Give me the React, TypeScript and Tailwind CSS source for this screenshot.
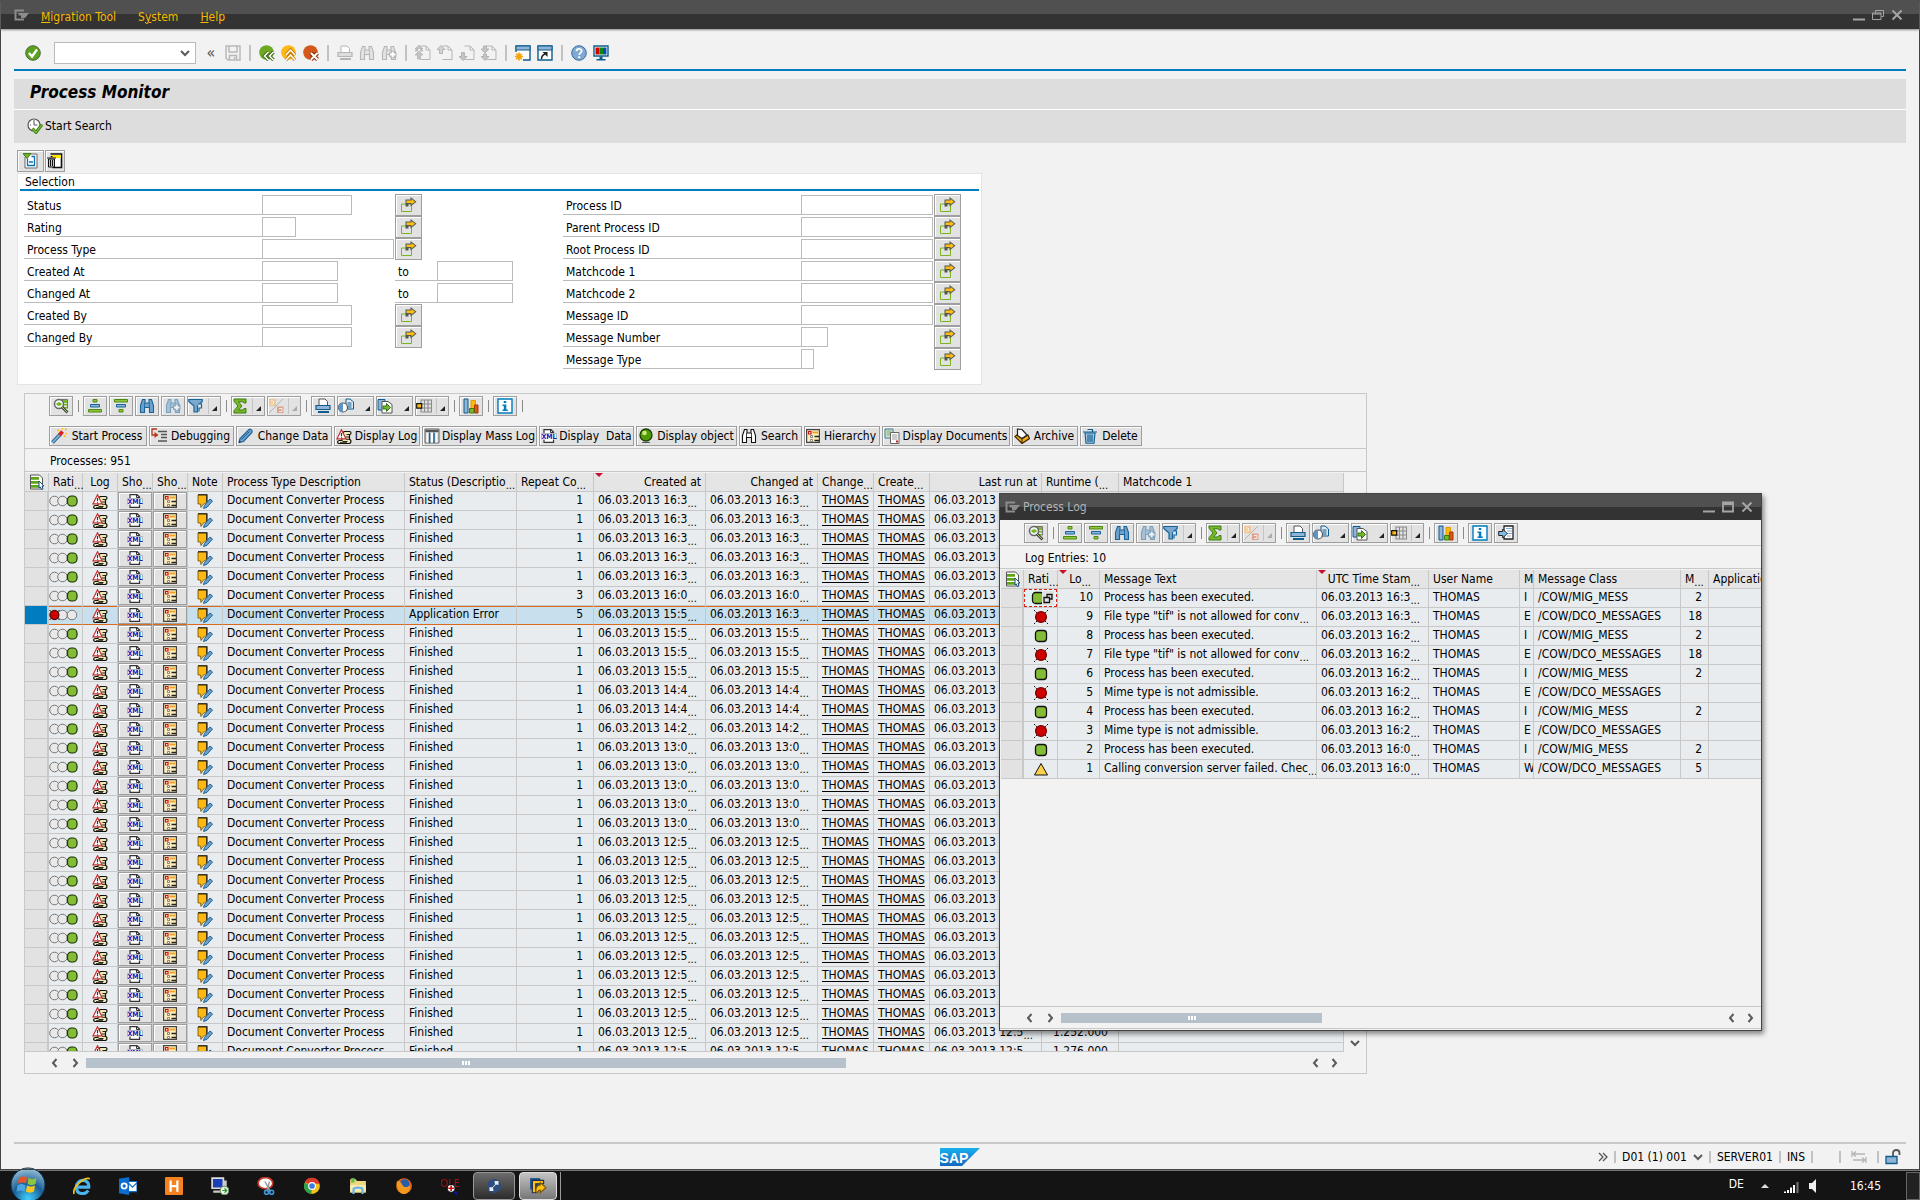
import type { ReactNode } from "react";

const FONT = "font-['DejaVu_Sans_Condensed','DejaVu_Sans',Tahoma,sans-serif]";

/* ---------- icons ---------- */

function Svg({ children, w = 16, h = 16, vb }: { children: ReactNode; w?: number; h?: number; vb?: string }) {
  return (
    <svg width={w} height={h} viewBox={vb ?? `0 0 ${w} ${h}`} fill="none" className="shrink-0" aria-hidden="true">
      {children}
    </svg>
  );
}

const SessionIcon = () => (
  <Svg w={16} h={12}>
    <path d="M10 10.500H1.500v-9H10" stroke="#8c8c8c" strokeWidth="2" />
    <path d="M4.500 4H15l-4 5H7V6.500H4.500z" fill="#8c8c8c" />
  </Svg>
);

const OkIcon = () => (
  <Svg>
    <circle cx="8" cy="8" r="7.300" fill="#5ba21f" stroke="#4b6b3c" />
    <path d="M4 8l3 3.500L12 4.500" stroke="#fff" strokeWidth="2.400" />
  </Svg>
);

const SaveIcon = () => (
  <Svg>
    <path d="M1 1h14v14H3l-2-2z" stroke="#b9b9b9" strokeWidth="1.500" />
    <path d="M4 1v6h8V1M4.500 15v-4.500h7V15M9.500 12v2" stroke="#b9b9b9" strokeWidth="1.500" />
  </Svg>
);

function RoundNav({ fill, children }: { fill: string; children: ReactNode }) {
  return (
    <Svg>
      <circle cx="7.500" cy="7.500" r="7.300" fill={fill} />
      {children}
    </Svg>
  );
}

const BackIcon = () => (
  <RoundNav fill="#6fa823">
    <path d="M9.500 7l-4 4 4 4M14.500 7l-4 4 4 4" stroke="#3f6b17" strokeWidth="3.400" />
    <path d="M9.500 7l-4 4 4 4M14.500 7l-4 4 4 4" stroke="#fff" strokeWidth="1.500" />
  </RoundNav>
);

const UpIcon = () => (
  <RoundNav fill="#fdb813">
    <path d="M5 10l4.500-5L14 10M5 15l4.500-5L14 15" stroke="#c77c05" strokeWidth="3.200" />
    <path d="M5 10l4.500-5L14 10M5 15l4.500-5L14 15" stroke="#fff" strokeWidth="1.500" />
  </RoundNav>
);

const CancelIcon = () => (
  <RoundNav fill="#d4581b">
    <path d="M8 8l6.500 6.500M14.500 8L8 14.500" stroke="#8e2b08" strokeWidth="4" />
    <path d="M8 8l6.500 6.500M14.500 8L8 14.500" stroke="#fff" strokeWidth="2" />
  </RoundNav>
);

const PrintIcon = ({ c = "#0f5c8c", f = "#8fb4d6" }: { c?: string; f?: string }) => (
  <Svg>
    <path d="M4 7V1h6l2.500 2.500V7" fill="#fff" stroke={c === "#0f5c8c" ? "#555" : c} />
    <path d="M1 7.500h14v4H1z" fill={f} stroke={c} strokeWidth="1.200" />
    <path d="M3 14h11" stroke={c} strokeWidth="2" />
  </Svg>
);

const FindIcon = ({ c = "#17649a", f = "#6fa0cb", plus }: { c?: string; f?: string; plus?: boolean }) => (
  <Svg>
    <path d="M3.500 1.500H6v3.500h4V1.500h2.500l2 6v7h-4v-5h-5v5h-4v-7z" fill={f} stroke={c} strokeWidth="1.100" />
    <path d="M5.500 5v5M10.500 5v5" stroke={c} strokeWidth=".8" />
    {plus && (
      <>
        <path d="M8 9.500h7.500M11.700 5.800v7.500" stroke={c} strokeWidth="4.400" />
        <path d="M9 9.500h5.500M11.700 6.800v5.500" stroke="#fff" strokeWidth="2" />
      </>
    )}
  </Svg>
);

const PageIcon = ({ dir }: { dir: "first" | "prev" | "next" | "last" }) => (
  <Svg>
    <path d="M5.500 1H11l4 4v9.500H5.500" stroke="#b5b5b5" />
    <path d="M11 1v4h4" stroke="#b5b5b5" />
    {dir === "first" && <path d="M4 0l4 4H5.500v2H8l-4-3-4 3h2.500V4H0zM4 6l4 4H5.500v4h-3v-4H0z" fill="#c4c4c4" stroke="#a9a9a9" strokeWidth=".6" />}
    {dir === "prev" && <path d="M4 .5l4 4H5.500v4h-3v-4H0z" fill="#d4d4d4" stroke="#a9a9a9" strokeWidth=".8" />}
    {dir === "next" && <path d="M4 15.500l4-4H5.500v-4h-3v4H0z" fill="#c4c4c4" stroke="#a9a9a9" strokeWidth=".8" />}
    {dir === "last" && <path d="M4 8L0 4h2.500V1h3v3H8zM4 15.500l4-4H5.500V9h-3v2.500H0z" fill="#c4c4c4" stroke="#a9a9a9" strokeWidth=".8" />}
  </Svg>
);

const NewSessionIcon = () => (
  <Svg>
    <path d="M1 7V1h14v14H8" fill="#fff" stroke="#0f5c8c" strokeWidth="1.400" />
    <path d="M1 1h14v4H1z" fill="#8fb4d6" stroke="#0f5c8c" />
    <path d="M4 7.500v8M0 11.500h8M1.200 8.700l5.600 5.600M6.800 8.700l-5.600 5.600" stroke="#f5a300" strokeWidth="1.600" />
  </Svg>
);

const ShortcutIcon = () => (
  <Svg>
    <path d="M1 1h14v14H1z" fill="#fff" stroke="#0f5c8c" strokeWidth="1.400" />
    <path d="M1 1h14v4H1z" fill="#8fb4d6" stroke="#0f5c8c" />
    <path d="M4.500 14c0-3 1-4 3.500-5" stroke="#222" strokeWidth="1.500" />
    <path d="M5.500 7h5v5z" fill="#222" />
  </Svg>
);

const HelpIcon = () => (
  <Svg>
    <circle cx="8" cy="8" r="7.300" fill="#7fa9d2" stroke="#3a6d9b" />
    <path d="M5.500 6.300C5.500 3 10.700 3.200 10.700 6c0 1.800-2.500 2-2.500 4" stroke="#fff" strokeWidth="1.800" />
    <path d="M7.200 11.300h2v1.900h-2z" fill="#fff" />
  </Svg>
);

const MonitorIcon = () => (
  <Svg>
    <path d="M1 1h14v10H1z" fill="#fff" stroke="#0f5c8c" strokeWidth="1.400" />
    <path d="M2.500 2.500h4v7h-4z" fill="#d40000" />
    <path d="M6.500 2.500h3.500v7H6.500z" fill="#0a8a12" />
    <path d="M10 2.500h3.500v7H10z" fill="#0050b0" />
    <path d="M6.500 11.500h3V14h3v1.500h-9V14h3z" fill="#0f5c8c" />
  </Svg>
);

const ExecuteIcon = () => (
  <Svg>
    <circle cx="7" cy="7" r="6" fill="#fff" stroke="#555" strokeWidth="1.200" />
    <path d="M7 2v5h3.500M3 7h1M7 11v1" stroke="#555" />
    <path d="M5.500 10.500l3.500 4 6-8" stroke="#3f7c14" strokeWidth="3" />
    <path d="M5.500 10.500l3.500 4 6-8" stroke="#7dc242" strokeWidth="1.200" />
  </Svg>
);

const DynSelIcon = () => (
  <Svg>
    <path d="M2 4v11h12V1H8" fill="#fff" stroke="#666" />
    <path d="M4.500 5.500v7h7v-9H8.500M6 9h4" stroke="#0f6fb0" strokeWidth="1.300" />
    <path d="M0 .5h8l-4 5z" fill="#6fb52b" stroke="#3f7c14" />
  </Svg>
);

const DeleteSelIcon = () => (
  <Svg>
    <path d="M3.500 1h11v13.500h-9" fill="#fff" stroke="#111" strokeWidth="1.600" />
    <path d="M4 2h10v3H4z" fill="#ffe600" />
    <path d="M1.500 6h6v8h-6z" fill="#b9c4ea" stroke="#111" />
    <path d="M0 5h9M3.500 3.500h2M3.500 7v6M5.500 7v6" stroke="#111" />
  </Svg>
);

const MultiIcon = () => (
  <Svg>
    <path d="M.5 7h10v7.500H.5z" stroke="#7ab51d" />
    <path d="M4.500 2.500h5V0l6 4.700-6 4.700V7H7.500v2.500h-3z" fill="#555" />
    <path d="M5.500 3.500h5V2l3.500 2.700-3.500 2.700V6h-5z" fill="#fdc010" />
  </Svg>
);

const DetailIcon = () => (
  <Svg>
    <path d="M4 1.500h10.500v9" stroke="#777" />
    <path d="M8 2h6v3H8zM10 6h4v1.500h-4zM10.500 9h3.500v1.500h-3.500z" fill="#76b82a" />
    <circle cx="6" cy="6" r="4.500" fill="#f4f8f4" stroke="#666" strokeWidth="1.500" />
    <path d="M3 6c2-2.500 4-2.500 6 0-2 2.500-4 2.500-6 0z" fill="#76b82a" />
    <path d="M9 9l5.500 5.500" stroke="#444" strokeWidth="2.800" />
    <path d="M9 9l5.500 5.500" stroke="#9ecb5f" />
  </Svg>
);

const SortAscIcon = () => (
  <Svg>
    <path d="M6 1.500h4v2.500H6z" fill="#8fc63d" stroke="#4f8a10" />
    <path d="M3.500 6.500h9v2.500h-9z" fill="#8fb4d6" stroke="#17649a" />
    <path d="M1.500 11.500h13V14h-13z" fill="#8fc63d" stroke="#4f8a10" />
  </Svg>
);

const SortDescIcon = () => (
  <Svg>
    <path d="M1.500 1.500h13V4h-13z" fill="#8fc63d" stroke="#4f8a10" />
    <path d="M3.500 6.500h9v2.500h-9z" fill="#8fb4d6" stroke="#17649a" />
    <path d="M6 11.500h4V14H6z" fill="#8fc63d" stroke="#4f8a10" />
  </Svg>
);

const FilterIcon = () => (
  <Svg>
    <path d="M.8 1.500h13.400v2L9.500 8v6H6V8L.8 3.500z" fill="#7ba8cf" stroke="#17649a" strokeWidth="1.200" />
    <path d="M10 6h3.500v4H11v3.500" fill="#dce8f2" stroke="#17649a" strokeWidth="1.200" />
  </Svg>
);

const SumIcon = () => (
  <Svg>
    <path d="M2 1h12v4h-2l-1-1.300H6.500L10 8l-3.500 4H11l1-1.500h2V15H2v-2.200L6 8 2 3.200z" fill="#76b82a" stroke="#3f7c14" />
  </Svg>
);

const SubtotalIcon = () => (
  <Svg>
    <path d="M1 1h7v7H1z" fill="#fbb03f" />
    <path d="M9 8.500h6.500v6.500H9z" fill="#e0623a" />
    <path d="M2.500 3h3v3h-3M11 10.500h3v3h-3" stroke="#fff6ee" />
    <path d="M1 15L15 1" stroke="#888" />
  </Svg>
);

const ViewsIcon = () => (
  <Svg>
    <path d="M8 1h4l3.500 3v7H8z" fill="#dce8f2" stroke="#0f5c8c" />
    <path d="M9.500 5h4M9.500 7h4M9.500 9h4" stroke="#0f5c8c" />
    <circle cx="5" cy="9.500" r="4.500" fill="#fff" stroke="#555" strokeWidth="1.200" />
    <path d="M5 5v9.500A4.500 4.500 0 015 5z" fill="#5f94c2" />
  </Svg>
);

const ExportIcon = () => (
  <Svg>
    <path d="M1 1.500h7V12H1z" fill="#8fb4d6" stroke="#0f5c8c" />
    <path d="M5 3.500h6l4 3V15H5z" fill="#fff" stroke="#555" />
    <path d="M6 8h3.500V5.500l4 4-4 4V11H6z" fill="#76b82a" stroke="#2d7a14" />
  </Svg>
);

const LayoutIcon = () => (
  <Svg>
    <path d="M6 2h9.500v12H5V2zM5 6h10.500M5 10h10.500M8.500 2v12M12 2v12" fill="#e3e3e3" stroke="#8a8a8a" strokeWidth="1.100" />
    <path d="M.7 5.700h5v4.500h-5z" fill="#fdb813" stroke="#111" strokeWidth="1.200" />
  </Svg>
);

const GraphIcon = () => (
  <Svg>
    <path d="M1 1h4v14H1z" fill="#8fb4d6" stroke="#0f5c8c" />
    <path d="M8 2.500h4.500V12H8z" fill="#fdb813" stroke="#e39a00" />
    <path d="M11.500 7H15v8h-3.500z" fill="#d4581b" stroke="#a83400" />
    <path d="M6.500 10.500h4.500V15H6.500z" fill="#76b82a" stroke="#3f7c14" />
  </Svg>
);

const InfoIcon = () => (
  <Svg>
    <path d="M1 1h14v14H1z" fill="#fff" stroke="#007cc0" strokeWidth="1.400" />
    <path d="M6.700 3h2.600v2H6.700zM5.500 6.500h3.800v5h1.500V13H5.500v-1.500h1.300V8H5.500z" fill="#007cc0" />
  </Svg>
);

const ExitIcon = () => (
  <Svg>
    <path d="M6 1h9v13H6z" fill="#fff" stroke="#222" strokeWidth="1.300" />
    <path d="M8 3.500h6M9 6h5M9 8.500h5M9 11h4" stroke="#7fa9d2" />
    <path d="M.7 6.500h4V4l4.500 4.500L4.700 13v-2.500h-4z" fill="#7cc0ee" stroke="#222" />
  </Svg>
);

const WandIcon = () => (
  <Svg>
    <path d="M1.500 14.500L9.500 6" stroke="#17649a" strokeWidth="3.600" />
    <path d="M1.500 14.500L9.500 6" stroke="#8fb4d6" strokeWidth="1.800" />
    <path d="M8.500 7l3-3.500" stroke="#e02020" strokeWidth="3.800" />
    <path d="M6.500 1.500L8 3M11.500 0v1.500M15.500.5L14 2M16 5.500h-1.500M14.500 9L13 7.500" stroke="#fdb813" strokeWidth="1.600" />
  </Svg>
);

const DebugIcon = () => (
  <Svg>
    <path d="M6 1H1v6h3" stroke="#b5371b" strokeWidth="1.300" />
    <path d="M3.500 4l4 3-4 3z" fill="#b5371b" />
    <path d="M7 3.500h9M10 6.500h6M10 9.500h6M7 13h9" stroke="#555" strokeWidth="1.600" />
  </Svg>
);

const PencilIcon = () => (
  <Svg>
    <path d="M1 14.500l1-4L11 1.500c1.500-1 4 1 3 3L5.500 13.500z" fill="#6fa0cb" stroke="#17649a" strokeWidth="1.100" />
    <path d="M3.500 11.500l8-8" stroke="#17649a" />
    <path d="M1 14.500l.5-2 1.500 1.500z" fill="#222" />
  </Svg>
);

const LogIcon = () => (
  <Svg w={16} h={15} vb="0 0 16 15">
    <path d="M8 2.500h5.500c2 0 2 3 0 3v5c2 0 2 4-.5 4H3.500c-2.500 0-2.500-3 0-3H6v-5z" fill="#efe9b4" stroke="#111" strokeWidth="1.200" />
    <path d="M6.500 12.500h5M4 13.700h7M10.500 5.500h3M9.500 8h3.500M10 10.300h3" stroke="#111" strokeWidth=".9" />
    <path d="M5.500.8L10 9.800H1z" fill="#fff" stroke="#c23030" strokeWidth="1.200" />
    <path d="M5.500 4v3M5.500 7.800v1" stroke="#333" strokeWidth="1.200" />
  </Svg>
);

const MassLogIcon = () => (
  <Svg>
    <path d="M1 1h14v14H1z" fill="#c9c9c9" stroke="#666" />
    <path d="M1.500 2h13v2h-13z" fill="#555" />
    <path d="M3.500 5v9.500M8 5v9.500M12.500 5v9.500" stroke="#fff" strokeWidth="2" />
    <path d="M5.500 4.500v10.500M10 4.500v10.500" stroke="#17649a" strokeWidth="1.400" />
  </Svg>
);

const XmlIcon = () => (
  <Svg w={16} h={14}>
    <path d="M3 5V.7h7L12.500 3v2M3 10v3.300h9.500V10" fill="#fff" stroke="#333" strokeWidth="1.200" />
    <path d="M9.500.7V3.500h3" stroke="#333" />
    <path d="M0 4h16v6.500H0z" fill="#fff" />
    <path d="M.5 10.500v-6h15v6" stroke="#8c94ab" strokeWidth=".7" />
    <text x="8" y="10" textAnchor="middle" fontSize="7" fontWeight="bold" fill="#0c14b4">XML</text>
  </Svg>
);

const BallIcon = () => (
  <Svg>
    <circle cx="8" cy="7" r="6" fill="#4f9a08" stroke="#1d3d04" strokeWidth="1.300" />
    <circle cx="6.500" cy="5" r="2.300" fill="#c9ec7a" />
    <path d="M4 14.500h8" stroke="#555" />
  </Svg>
);

const HierarchyIcon = () => (
  <Svg w={14} h={14}>
    <path d="M.6.6h12.800v12.800H.6z" fill="#fdeebb" stroke="#444" strokeWidth="1.200" />
    <path d="M2.500 2.500H5V5H2.500z" fill="#fff" stroke="#d01010" strokeWidth="1.200" />
    <path d="M6.500 3.500H12" stroke="#f0a020" strokeWidth="1.800" />
    <path d="M4.500 6.500h2v2h-2zM4.500 10.500h2v2h-2z" fill="#fff" stroke="#777" strokeWidth=".9" />
    <path d="M8.500 7.500H13M8.500 11.500H13" stroke="#222" strokeWidth="1.300" />
  </Svg>
);

const DocsIcon = () => (
  <Svg>
    <path d="M1 1h8v9H1z" fill="#d5e5ea" stroke="#3e7b8c" />
    <path d="M2.500 3h5M2.500 5h5M2.500 7h5" stroke="#7fae3c" />
    <path d="M6.500 4.500h8.500v11H6.500z" fill="#fff" stroke="#666" />
    <path d="M8 7h5.500M8 9h5.500M8 11h5.500" stroke="#999" />
    <path d="M12 12.500h2v2h-2z" fill="#d02020" />
  </Svg>
);

const ArchiveIcon = () => (
  <Svg>
    <path d="M1 8.500L3 7l5 3.500L14 7l1.500 3.500L8 15.500z" fill="#f0a818" stroke="#3b2500" strokeWidth="1.200" />
    <path d="M3.500 1L8 1.500l5 5.500-5 3.500-4.500-3z" fill="#fff" stroke="#222" strokeWidth="1.200" />
    <path d="M8 11v4" stroke="#3b2500" />
  </Svg>
);

const TrashIcon = () => (
  <Svg>
    <path d="M3 5h10l-1 10.300H4z" fill="#a8cbe3" stroke="#0f5c8c" strokeWidth="1.100" />
    <path d="M1 4h14M5.500 1.500h5V4M6 6.500v7.500M8 6.500v7.500M10 6.500v7.500" stroke="#0f5c8c" strokeWidth="1.200" />
  </Svg>
);

const SelectAllIcon = () => (
  <Svg>
    <path d="M1.500 1h9l3 3v11h-12z" fill="#fff" stroke="#555" />
    <path d="M2 3h8v2.700H2zM2 7h9v2.700H2zM2 11h8v2.700H2z" fill="#5da514" />
    <path d="M10 7l5 5h-2l1 3-1.500.5L11.300 13 10 14z" fill="#fff" stroke="#1c4f8a" />
  </Svg>
);

const NoteIcon = () => (
  <Svg w={16} h={15} vb="0 0 16 15">
    <path d="M1 1h8.500v8c-2 0-2 1-3.500 1.500L4 13.500 3.500 10H1z" fill="#fdb813" stroke="#6b4c00" strokeWidth=".8" />
    <path d="M1 .8h9V8" stroke="#111" strokeWidth="1.100" />
    <path d="M6.500 14.500l1-3L13 5l2.500 2-5.500 6.300z" fill="#6fa0cb" stroke="#17649a" />
  </Svg>
);

const LightsIcon = ({ red }: { red?: boolean }) => (
  <Svg w={29} h={14}>
    {[5.500, 13.500, 23].map((cx) => (
      <circle key={cx} cx={cx} cy="7" r="4.800" fill="#e9e9e9" stroke="#777" />
    ))}
    {red ? (
      <>
        <path d="M.5 2l10 10M10.500 2l-10 10" stroke="#111" />
        <circle cx="5.500" cy="7" r="4.500" fill="#cf0000" stroke="#3d0000" />
      </>
    ) : (
      <rect x="18.500" y="2" width="9.500" height="10" rx="4" fill="#84bd35" stroke="#1f3a08" strokeWidth="1.200" />
    )}
  </Svg>
);

const StateIcon = ({ s }: { s: string }) => (
  <Svg w={16} h={14}>
    {s === "ok" && <rect x="2.500" y="1.500" width="11" height="11" rx="3" fill="#84bd35" stroke="#111" strokeWidth="1.300" />}
    {s === "err" && (
      <>
        <path d="M1 0l14 14M15 0L1 14" stroke="#111" strokeDasharray="2 1" />
        <circle cx="8" cy="7" r="5.400" fill="#cf0000" stroke="#7a0000" strokeWidth="1.300" />
      </>
    )}
    {s === "warn" && <path d="M8 1.500L14.500 13h-13z" fill="#fdd04a" stroke="#111" />}
  </Svg>
);

function Chevron({ d }: { d: "l" | "r" | "d" }) {
  const path = { l: "M6.500 1L3 5l3.500 4", r: "M3.500 1L7 5l-3.500 4", d: "M1 3l4 4 4-4" }[d];
  return (
    <Svg w={10} h={10}>
      <path d={path} stroke="#5a5a5a" strokeWidth="2" />
    </Svg>
  );
}

const SapLogo = () => (
  <Svg w={42} h={18}>
    <defs>
      <linearGradient id="sap" x1="0" y1="0" x2="0" y2="1">
        <stop offset="0" stopColor="#18b0ee" />
        <stop offset="1" stopColor="#1468be" />
      </linearGradient>
    </defs>
    <path d="M1 0h40L23 18H1z" fill="url(#sap)" />
    <text x="15" y="14.500" textAnchor="middle" fontSize="14" fontWeight="bold" fontFamily="Liberation Sans, Arial, sans-serif" fill="#fff">SAP</text>
  </Svg>
);

/* ---------- shared controls ---------- */

const BTN = "flex items-center border border-[#9e9e9e] bg-[#e2e2e2] shadow-[inset_1px_1px_0_#fff]";

function Flat({ label, children }: { label: string; children: ReactNode }) {
  return (
    <button type="button" aria-label={label} className="flex w-[22px] items-center justify-center">
      {children}
    </button>
  );
}

const Sep = () => <span className="mx-[5px] h-4 w-0.5 bg-[#c2c2c2]" />;

const MultiButton = ({ label }: { label: string }) => (
  <button type="button" aria-label={`Multiple selection ${label}`} className={`${BTN} h-[22px] w-[27px] justify-center`}>
    <MultiIcon />
  </button>
);

function Tool({ label, children, menu, wide, off }: { label: string; children: ReactNode; menu?: boolean; wide?: boolean; off?: boolean }) {
  return (
    <button
      type="button"
      aria-label={label}
      className={`${BTN} h-5 ${menu ? (wide ? "w-[37px]" : "w-[34px]") : "w-6"} justify-center`}
    >
      <span className={off ? "opacity-50" : ""}>{children}</span>
      {menu && (
        <span className={`ml-auto flex h-4 items-end p-0.5 ${wide ? "" : "border-l border-[#c4c4c4]"}`}>
          <Svg w={7} h={7}>
            <path d="M6 1v5H1z" fill={off ? "#aaa" : "#222"} />
          </Svg>
        </span>
      )}
    </button>
  );
}

const ToolSep = () => (
  <span className="flex w-1.5 justify-center">
    <span className="h-3 w-px bg-[#8a8a8a]" />
  </span>
);

function AlvToolbar({ exit }: { exit?: boolean }) {
  return (
    <div className="flex items-center gap-0.5">
      <Tool label="Details"><DetailIcon /></Tool>
      <ToolSep />
      <Tool label="Sort ascending"><SortAscIcon /></Tool>
      <Tool label="Sort descending"><SortDescIcon /></Tool>
      <Tool label="Find"><FindIcon /></Tool>
      <Tool label="Find next" off><FindIcon plus /></Tool>
      <Tool label="Filter" menu><FilterIcon /></Tool>
      <ToolSep />
      <Tool label="Total" menu><SumIcon /></Tool>
      <Tool label="Subtotals" menu off><SubtotalIcon /></Tool>
      <ToolSep />
      <Tool label="Print"><PrintIcon /></Tool>
      <Tool label="Views" menu wide><ViewsIcon /></Tool>
      <Tool label="Export" menu wide><ExportIcon /></Tool>
      <Tool label="Layout" menu><LayoutIcon /></Tool>
      <ToolSep />
      <Tool label="Graphic"><GraphIcon /></Tool>
      <ToolSep />
      <Tool label="Information"><InfoIcon /></Tool>
      {exit ? <Tool label="Close log"><ExitIcon /></Tool> : <ToolSep />}
    </div>
  );
}

// Long values are cut off and end in three low dots
function Cut({ children }: { children: string }) {
  return (
    <>
      {children}
      <span className="align-sub text-[11px] leading-[0]">...</span>
    </>
  );
}

const SortMark = () => <span className="absolute top-0 left-px border-x-4 border-t-4 border-x-transparent border-t-[#c8102e]" />;

const TH = "relative h-[19px] border-r border-b border-[#c8c8c8] bg-[#e5e5e5] px-1 pt-px pb-0 text-left align-top font-normal leading-[17px]";
const TD = "h-[19px] overflow-hidden border-r border-b border-[#c8c8c8] px-1 py-0 align-top leading-[17px]";

/* ---------- selection form ---------- */

type Field = { label: string; width: string; to?: boolean };

const leftFields: Field[] = [
  { label: "Status", width: "w-[90px]" },
  { label: "Rating", width: "w-[34px]" },
  { label: "Process Type", width: "w-[132px]" },
  { label: "Created At", width: "w-[76px]", to: true },
  { label: "Changed At", width: "w-[76px]", to: true },
  { label: "Created By", width: "w-[90px]" },
  { label: "Changed By", width: "w-[90px]" },
];

const rightFields: Field[] = [
  { label: "Process ID", width: "w-[132px]" },
  { label: "Parent Process ID", width: "w-[132px]" },
  { label: "Root Process ID", width: "w-[132px]" },
  { label: "Matchcode 1", width: "w-[132px]" },
  { label: "Matchcode 2", width: "w-[132px]" },
  { label: "Message ID", width: "w-[132px]" },
  { label: "Message Number", width: "w-[27px]" },
  { label: "Message Type", width: "w-[13px]" },
];

const LABEL = "h-5 border-b border-[#bbb] pl-[3px] leading-[22px]";
const INPUT = "h-5 border border-[#bbb] bg-white px-1 outline-none";

function FieldRow({ field }: { field: Field }) {
  const id = field.label.toLowerCase().replace(/ /g, "-");
  return (
    <div className="flex h-[22px] items-center">
      <label htmlFor={id} className={`${LABEL} w-[238px]`}>{field.label}</label>
      <div className="w-[133px]">
        <input id={id} className={`${INPUT} ${field.width} block`} />
      </div>
      {field.to ? (
        <>
          <label htmlFor={`${id}-to`} className={`${LABEL} w-[42px]`}>to</label>
          <input id={`${id}-to`} className={`${INPUT} w-[76px]`} />
        </>
      ) : (
        <MultiButton label={field.label} />
      )}
    </div>
  );
}

/* ---------- process grid ---------- */

const times = [
  ...Array(5).fill("16:3"),
  "16:0",
  ...Array(4).fill("15:5"),
  "14:4",
  "14:4",
  "14:2",
  ...Array(5).fill("13:0"),
  ...Array(12).fill("12:5"),
] as string[];

const processes = times.map((time, i) => ({
  id: i,
  error: i === 6,
  status: i === 6 ? "Application Error" : "Finished",
  repeat: i === 5 ? 3 : i === 6 ? 5 : 1,
  created: time,
  changed: i === 6 ? "16:3" : time,
  runtime: i === 28 ? "1.252.000" : i === 29 ? "1.276.000" : "",
}));

const actions: [string, ReactNode, string][] = [
  ["Start Process", <WandIcon />, "w-[98px]"],
  ["Debugging", <DebugIcon />, "w-[85px]"],
  ["Change Data", <PencilIcon />, "w-24"],
  ["Display Log", <LogIcon />, "w-[86px]"],
  ["Display Mass Log", <MassLogIcon />, "w-[115px]"],
  ["Display  Data", <XmlIcon />, "w-[95px]"],
  ["Display object", <BallIcon />, "w-[101px]"],
  ["Search", <FindIcon c="#111" f="#fff" />, "w-[63px]"],
  ["Hierarchy", <HierarchyIcon />, "w-[76px]"],
  ["Display Documents", <DocsIcon />, "w-[128px]"],
  ["Archive", <ArchiveIcon />, "w-[66px]"],
  ["Delete", <TrashIcon />, "w-[62px]"],
];

function ProcessTable() {
  return (
    <table className="w-full table-fixed border-separate border-spacing-0 whitespace-nowrap">
      <colgroup>
        <col className="w-[24px]" />
        <col className="w-[34px]" />
        <col className="w-[35px]" />
        <col className="w-[35px]" />
        <col className="w-[35px]" />
        <col className="w-[35px]" />
        <col className="w-[182px]" />
        <col className="w-[112px]" />
        <col className="w-[77px]" />
        <col className="w-[112px]" />
        <col className="w-[112px]" />
        <col className="w-[56px]" />
        <col className="w-[56px]" />
        <col className="w-[112px]" />
        <col className="w-[77px]" />
        <col />
      </colgroup>
      <thead>
        <tr>
          <th className={TH} aria-label="Select all"><SelectAllIcon /></th>
          <th className={TH}><Cut>Rati</Cut></th>
          <th className={`${TH} text-center!`}>Log</th>
          <th className={TH}><Cut>Sho</Cut></th>
          <th className={TH}><Cut>Sho</Cut></th>
          <th className={TH}>Note</th>
          <th className={TH}>Process Type Description</th>
          <th className={TH}><Cut>Status (Descriptio</Cut></th>
          <th className={TH}><Cut>Repeat Co</Cut></th>
          <th className={`${TH} text-right`}><SortMark />Created at</th>
          <th className={`${TH} text-right`}>Changed at</th>
          <th className={TH}><Cut>Change</Cut></th>
          <th className={TH}><Cut>Create</Cut></th>
          <th className={`${TH} text-right`}>Last run at</th>
          <th className={TH}><Cut>Runtime (</Cut></th>
          <th className={TH}>Matchcode 1</th>
        </tr>
      </thead>
      <tbody>
        {processes.map((p) => {
          const cell = p.error
            ? `${TD} border-b-[#d96b1f] bg-[#c8e0ed] shadow-[inset_0_1px_0_#d96b1f]`
            : `${TD} bg-[#e8ecef]`;
          return (
            <tr key={p.id}>
              <td className={`${TD} border-r-2 ${p.error ? "bg-[#007cc0]" : "bg-[#e2e2e2]"}`} />
              <td className={cell}><div className="-mx-1 flex h-[18px] items-center"><LightsIcon red={p.error} /></div></td>
              <td className={cell}><div className="flex h-[18px] items-center justify-center"><LogIcon /></div></td>
              <td className={cell}>
                <button type="button" aria-label="Show XML" className={`${BTN} -mx-1 h-[18px] w-[34px] justify-center`}><XmlIcon /></button>
              </td>
              <td className={cell}>
                <button type="button" aria-label="Show hierarchy" className={`${BTN} -mx-1 h-[18px] w-[34px] justify-center`}><HierarchyIcon /></button>
              </td>
              <td className={cell}><div className="flex h-[18px] items-center justify-center"><NoteIcon /></div></td>
              <td className={cell}>Document Converter Process</td>
              <td className={cell}>{p.status}</td>
              <td className={`${cell} pr-2.5 text-right`}>{p.repeat}</td>
              <td className={cell}><Cut>{`06.03.2013 ${p.created}`}</Cut></td>
              <td className={cell}><Cut>{`06.03.2013 ${p.changed}`}</Cut></td>
              <td className={cell}><a href="#" className="underline underline-offset-2">THOMAS</a></td>
              <td className={cell}><a href="#" className="underline underline-offset-2">THOMAS</a></td>
              <td className={cell}><Cut>{`06.03.2013 ${p.created}`}</Cut></td>
              <td className={`${cell} pr-2.5 text-right`}>{p.runtime}</td>
              <td className={cell} />
            </tr>
          );
        })}
      </tbody>
    </table>
  );
}

function ScrollBar({ thumb }: { thumb: string }) {
  return (
    <div className="flex h-[21px] items-center">
      <div className="flex gap-2.5 pr-1.5">
        <Chevron d="l" />
        <Chevron d="r" />
      </div>
      <div className={`${thumb} flex h-2.5 items-center justify-center gap-px bg-[#b7c1cc]`}>
        <span className="h-1 w-0.5 bg-white" />
        <span className="h-1 w-0.5 bg-white" />
        <span className="h-1 w-0.5 bg-white" />
      </div>
      <div className="ml-auto flex gap-2">
        <Chevron d="l" />
        <Chevron d="r" />
      </div>
    </div>
  );
}

function ProcessGrid() {
  return (
    <section className="mt-2 ml-2.5 w-full max-w-[1343px] border border-[#c8c8c8]">
      <div className="pt-0.5 pl-6">
        <AlvToolbar />
      </div>
      <div className="flex gap-0.5 border-b border-[#c8c8c8] pt-2.5 pb-0.5 pl-6">
        {actions.map(([label, icon, width]) => (
          <button key={label} type="button" className={`${BTN} ${width} h-5 gap-px overflow-hidden pl-px whitespace-pre`}>
            {icon}
            <span className="flex-1 text-center">{label}</span>
          </button>
        ))}
      </div>
      <div className="h-[23px] border-b border-[#c8c8c8] pl-[25px] leading-[25px]">Processes: 951</div>
      <div className="flex">
        <div className="h-[580px] flex-1 overflow-hidden border-b border-[#c8c8c8] pt-px">
          <ProcessTable />
        </div>
        <div className="flex w-[22px] items-end justify-center pb-1">
          <Chevron d="d" />
        </div>
      </div>
      <div className="pr-[27px] pl-[25px]">
        <ScrollBar thumb="w-[760px]" />
      </div>
    </section>
  );
}

/* ---------- process log window ---------- */

const OK_TEXT = "Process has been executed.";
const logEntries = [
  { no: 10, state: "ok", text: OK_TEXT, time: "16:3", type: "I", msg: "2" },
  { no: 9, state: "err", text: 'File type "tif" is not allowed for conv', cut: true, time: "16:3", type: "E", msg: "18" },
  { no: 8, state: "ok", text: OK_TEXT, time: "16:2", type: "I", msg: "2" },
  { no: 7, state: "err", text: 'File type "tif" is not allowed for conv', cut: true, time: "16:2", type: "E", msg: "18" },
  { no: 6, state: "ok", text: OK_TEXT, time: "16:2", type: "I", msg: "2" },
  { no: 5, state: "err", text: "Mime type is not admissible.", time: "16:2", type: "E", msg: "" },
  { no: 4, state: "ok", text: OK_TEXT, time: "16:2", type: "I", msg: "2" },
  { no: 3, state: "err", text: "Mime type is not admissible.", time: "16:2", type: "E", msg: "" },
  { no: 2, state: "ok", text: OK_TEXT, time: "16:0", type: "I", msg: "2" },
  { no: 1, state: "warn", text: "Calling conversion server failed. Chec", cut: true, time: "16:0", type: "W", msg: "5" },
];

function WindowButtons({ restore }: { restore?: boolean }) {
  return (
    <div className="ml-auto flex gap-[7px]">
      <button type="button" aria-label="Minimize"><Svg w={12} h={12}><path d="M0 10.500h12" stroke="#a5a5a5" strokeWidth="2" /></Svg></button>
      <button type="button" aria-label="Maximize">
        <Svg w={12} h={12}>
          {restore ? (
            <path d="M3.500 3.500v-2h8v6h-2M.5 4h8.500v6.500H.5zM.5 5h8.500" stroke="#a5a5a5" />
          ) : (
            <path d="M1 1.500h10v9H1zM1 3h10" stroke="#a5a5a5" strokeWidth="1.800" />
          )}
        </Svg>
      </button>
      <button type="button" aria-label="Close"><Svg w={12} h={12}><path d="M1.500 1.500l9 9M10.500 1.500l-9 9" stroke="#a5a5a5" strokeWidth="2" /></Svg></button>
    </div>
  );
}

function ProcessLog() {
  return (
    <section
      role="dialog"
      aria-label="Process Log"
      className="absolute top-[493px] left-[998px] w-[763px] border border-[#444] bg-[#f2f2f2] shadow-[2px_3px_5px_rgba(0,0,0,0.45)]"
    >
      <div className="flex h-[26px] items-center gap-0.5 bg-[linear-gradient(#505050_50%,#333_50%)] pr-2 pl-[5px] text-[#b4b4b4]">
        <SessionIcon />
        <h2>Process Log</h2>
        <WindowButtons />
      </div>
      <div className="border-b border-[#c8c8c8] pt-[3px] pb-0.5 pl-6">
        <AlvToolbar exit />
      </div>
      <div className="h-[23px] border-b border-[#c8c8c8] pl-[25px] leading-[25px]">Log Entries: 10</div>
      <div className="h-[438px] overflow-hidden border-b border-[#c8c8c8] pt-px pl-px">
        <table className="w-full table-fixed border-separate border-spacing-0 whitespace-nowrap">
          <colgroup>
            <col className="w-[23px]" />
            <col className="w-[34px]" />
            <col className="w-[42px]" />
            <col className="w-[217px]" />
            <col className="w-[112px]" />
            <col className="w-[91px]" />
            <col className="w-[14px]" />
            <col className="w-[147px]" />
            <col className="w-[28px]" />
            <col />
          </colgroup>
          <thead>
            <tr>
              <th className={TH} aria-label="Select all"><SelectAllIcon /></th>
              <th className={TH}><Cut>Rati</Cut></th>
              <th className={`${TH} pr-2 text-right`}><SortMark /><Cut>Lo</Cut></th>
              <th className={TH}>Message Text</th>
              <th className={`${TH} pr-2 text-right`}><SortMark /><Cut>UTC Time Stam</Cut></th>
              <th className={TH}>User Name</th>
              <th className={`${TH} overflow-hidden`}>M</th>
              <th className={TH}>Message Class</th>
              <th className={TH}><Cut>M</Cut></th>
              <th className={`${TH} overflow-hidden border-r-0`}>Application</th>
            </tr>
          </thead>
          <tbody>
            {logEntries.map((e) => {
              const cell = `${TD} bg-[#e8ecef]`;
              return (
                <tr key={e.no}>
                  <td className={`${TD} border-r-2 bg-[#e2e2e2]`} />
                  <td className={cell}>
                    {e.no === 10 ? (
                      <div className="-mx-1 flex h-[18px] items-center justify-end border border-dashed border-[#e02010] bg-[#e3f1f9] pr-0.5">
                        <StateIcon s={e.state} />
                        <button type="button" aria-label="Open entry" className="-ml-1 bg-[#e2e2e2] px-px">
                          <Svg w={10} h={14}>
                            <path d="M1 6.500h5.500v5H1zM4 6V3.500h5V8H7" stroke="#111" strokeWidth="1.300" />
                          </Svg>
                        </button>
                      </div>
                    ) : (
                      <div className="flex h-[18px] items-center justify-center"><StateIcon s={e.state} /></div>
                    )}
                  </td>
                  <td className={`${cell} pr-1.5 text-right`}>{e.no}</td>
                  <td className={cell}>{e.cut ? <Cut>{e.text}</Cut> : e.text}</td>
                  <td className={cell}><Cut>{`06.03.2013 ${e.time}`}</Cut></td>
                  <td className={cell}>THOMAS</td>
                  <td className={cell}>{e.type}</td>
                  <td className={cell}>{e.type === "I" ? "/COW/MIG_MESS" : "/COW/DCO_MESSAGES"}</td>
                  <td className={`${cell} pr-1.5 text-right`}>{e.msg}</td>
                  <td className={`${cell} border-r-0`} />
                </tr>
              );
            })}
          </tbody>
        </table>
      </div>
      <div className="mb-px border-b border-[#c8c8c8] pr-1.5 pl-[25px]">
        <ScrollBar thumb="w-[261px]" />
      </div>
    </section>
  );
}

/* ---------- status bar and taskbar ---------- */

const StatusSep = () => <span className="h-3 w-0.5 bg-[#c2c2c2]" />;

function StatusBar() {
  return (
    <footer className="mt-auto mr-[13px] ml-[13px] flex h-[27px] items-center border-t-2 border-[#c8c8c8]">
      <div className="flex flex-1 justify-center">
        <SapLogo />
      </div>
      <div className="absolute right-[18px] flex items-center gap-1.5">
        <Svg w={10} h={10}><path d="M1 1l4 4-4 4M5 1l4 4-4 4" stroke="#555" strokeWidth="1.300" /></Svg>
        <StatusSep />
        <span>D01 (1) 001</span>
        <Chevron d="d" />
        <StatusSep />
        <span>SERVER01</span>
        <StatusSep />
        <span>INS</span>
        <span className="mr-5"><span className="block h-3 w-0.5 bg-[#c2c2c2]" /></span>
        <StatusSep />
        <span className="mx-1">
          <Svg><path d="M1 2v6M15 8v6M2 5h12M2 11h12M5 2.500L2 5l3 2.500M11 8.500l3 2.500-3 2.500" stroke="#b5b5b5" strokeWidth="1.300" /></Svg>
        </span>
        <StatusSep />
        <Svg>
          <path d="M8 7V4c0-4 6.500-4 6.500 0v2" stroke="#555" strokeWidth="1.800" />
          <path d="M1 7.500h11v7H1z" fill="#8fb4d6" stroke="#0f5c8c" strokeWidth="1.300" />
        </Svg>
      </div>
    </footer>
  );
}

const taskIcons: [string, ReactNode][] = [
  ["Internet Explorer", <>
    <path d="M4 9h10c1-8-11-8-11 0 0 7 8 7 10.500 3" stroke="#49b4ee" strokeWidth="2.800" />
    <path d="M1 15C-1 9 10 0 15 1.500" stroke="#f5c518" strokeWidth="1.500" />
  </>],
  ["Outlook", <>
    <path d="M8 4h8v9H8z" fill="#fff" stroke="#0f6cc0" />
    <path d="M8 5l4 4 4-4" stroke="#0f6cc0" />
    <path d="M0 1.500L9 0v16l-9-1.500z" fill="#0a6ed0" />
    <circle cx="4.600" cy="8" r="2.300" stroke="#fff" strokeWidth="1.600" />
  </>],
  ["H", <>
    <rect width="16" height="16" rx="1" fill="#f58220" />
    <path d="M5 3v10M11 3v10M5 8h6" stroke="#fff" strokeWidth="2" />
  </>],
  ["Remote Desktop", <>
    <path d="M1 1h10v9H1z" fill="#1a3fb5" stroke="#ddd" strokeWidth="1.500" />
    <path d="M11 3h3v9h-3zM2 12h9v2H2z" fill="#c9c9c9" />
    <circle cx="12" cy="12" r="3.800" fill="#e9f3e6" stroke="#6d8f66" />
    <path d="M10 12h4M12 10l2 2-2 2" stroke="#2f8f2f" />
  </>],
  ["Snipping Tool", <>
    <ellipse cx="7.500" cy="5.500" rx="6.500" ry="5" fill="#fff" stroke="#c0392b" strokeWidth="1.500" />
    <path d="M7 4l5 9M11 4l-2 9" stroke="#999" strokeWidth="1.300" />
    <circle cx="8.500" cy="13.500" r="1.800" stroke="#3d9be0" strokeWidth="1.400" />
    <circle cx="13" cy="13.500" r="1.800" stroke="#3d9be0" strokeWidth="1.400" />
  </>],
  ["Chrome", <>
    <circle cx="8" cy="8" r="7" fill="#f2c314" />
    <path d="M8 8L1.500 4.500A7.200 7.200 0 0114.800 6H8z" fill="#dd3a2b" />
    <path d="M8 8l-.5 7A7 7 0 011.500 5z" fill="#2fa24b" />
    <circle cx="8" cy="8" r="3" fill="#3d7de0" stroke="#fff" />
  </>],
  ["Explorer", <>
    <path d="M1 2h5l1 1.500h8V14H1z" fill="#f0d77c" />
    <path d="M2 1h3v4H2z" fill="#6cbf4b" />
    <path d="M1 7h14v6H1z" fill="#f8ecb0" />
    <path d="M4 15v-4c0-2 8-2 8 0v4" stroke="#6db5e8" strokeWidth="2" />
  </>],
  ["Firefox", <>
    <circle cx="8" cy="8" r="7" fill="#e66a12" />
    <circle cx="8.500" cy="6.500" r="4.500" fill="#2b5ca8" />
    <path d="M1.500 4c3-1 4 1 5 3s4 3 7 0c0 6-3 8-6 8s-6-4-6-11z" fill="#f39a1e" />
  </>],
  ["OLE", <>
    <text x="8" y="9" textAnchor="middle" fontSize="10" fill="#9c1313">OLE</text>
    <circle cx="9" cy="10" r="3.500" fill="#fff" stroke="#111" />
    <path d="M9 7.500v5M6.500 10h5" stroke="#d01010" strokeWidth="1.500" />
    <path d="M12 13l2.500 2.500" stroke="#1010c0" strokeWidth="1.500" />
  </>],
];

function Taskbar() {
  return (
    <nav className="flex h-[30px] items-center border-t border-[#777] bg-[#141414] text-white">
      <button type="button" aria-label="Start" className="mt-[-4px] mr-[13px] ml-2.5">
        <Svg w={36} h={34}>
          <defs>
            <radialGradient id="orb" cx=".5" cy=".9" r=".9">
              <stop offset="0" stopColor="#3fd0ff" />
              <stop offset=".5" stopColor="#1c5f95" />
              <stop offset="1" stopColor="#9cc3da" />
            </radialGradient>
          </defs>
          <circle cx="18" cy="18" r="17" fill="url(#orb)" stroke="#0c2b45" />
          <path d="M9 11c3-2 5-2 8-.5l-1 6c-3-1.500-5-1.500-8 0z" fill="#e8542a" />
          <path d="M18.500 11c3 1.500 5 1.500 8 0l-1 6c-3 1.500-5 1.500-8 0z" fill="#8cc63f" />
          <path d="M7.500 18.500c3-2 5-2 8 0l-1 6c-3-1.500-5-1.500-8 0z" fill="#4ba7e0" />
          <path d="M17 18.500c3 1.500 5 1.500 8 0l-1 6c-3 1.500-5 1.500-8 0z" fill="#fcc419" />
        </Svg>
      </button>
      {taskIcons.map(([label, drawing]) => (
        <button key={label} type="button" aria-label={label} className="flex w-[46px] justify-center pt-px">
          <Svg w={18} h={18} vb="0 0 16 16">{drawing}</Svg>
        </button>
      ))}
      <button type="button" aria-label="SAP Logon" className="flex h-7 w-[42px] items-center justify-center rounded-sm border border-[#999] bg-[linear-gradient(#6b6b6b,#2c2c2c)]">
        <Svg>
          <circle cx="8" cy="8" r="7" fill="#2c4d7c" />
          <path d="M8.500 3H12.500V7L10 6.500 7 9.500l.5 3.500H3.500V9L6 9.500 9 6.500z" fill="#e5ecf5" />
        </Svg>
      </button>
      <button type="button" aria-label="Migration Tool" className="ml-1 flex h-7 w-[38px] items-center justify-center rounded-sm border border-[#ddd] bg-[linear-gradient(#c4c4c4,#777)]">
        <Svg w={18} h={18} vb="0 0 16 16">
          <path d="M1 1h9v10H1z" fill="#1c4f8a" />
          <path d="M3 3h10v3H6v8H3z" fill="#fdc010" stroke="#1c2f50" />
          <path d="M6 13c0-4 1-6 4-6V5l5 4.500-5 4.500v-2.500c-1.500 0-2 .5-2.500 2.500z" fill="#fdc010" stroke="#7a5500" />
        </Svg>
      </button>
      <span className="h-7 w-1 border-r border-[#999]" />
      <div className="ml-auto flex items-center">
        <span className="pb-1">DE</span>
        <Svg w={40} h={14}><path d="M21 5l4 4h-8z" fill="#ddd" /></Svg>
        <Svg><path d="M1 13.500v1.500M4 12v3M7 9.500V15M10 7v8" stroke="#fff" strokeWidth="2" /><path d="M13.500 4v11" stroke="#777" strokeWidth="2" /></Svg>
        <Svg w={30} h={14}><path d="M9 4h3l4-4v14l-4-4H9z" fill="#eee" /></Svg>
        <time className="pr-[25px] pl-5">16:45</time>
        <button type="button" aria-label="Show desktop" className="h-7 w-3.5 border border-[#666] bg-[#222]" />
      </div>
    </nav>
  );
}

/* ---------- page ---------- */

export default function App() {
  return (
    <div className={`relative flex min-h-screen flex-col bg-[#f2f2f2] text-[12px] leading-4 text-black ${FONT}`}>
      <div className="relative flex flex-1 flex-col border-x border-b border-[#444]">
        <header className="flex h-[29px] items-center bg-[linear-gradient(#505050_50%,#333_50%)] pr-4 pl-[13px] text-[#f7b900] shadow-[0_1px_2px_#888]">
          <SessionIcon />
          <nav className="flex gap-[22px] pt-1 pl-[11px]">
            <a href="#"><u>M</u>igration Tool</a>
            <a href="#">S<u>y</u>stem</a>
            <a href="#"><u>H</u>elp</a>
          </nav>
          <WindowButtons restore />
        </header>

        <main className="mx-[13px]">
          <div className="flex h-[42px] items-center border-b-2 border-[#007cc0] pt-2 pl-2">
            <Flat label="Enter"><OkIcon /></Flat>
            <div className="relative ml-2.5">
              <select aria-label="Command" className="block h-[22px] w-[142px] appearance-none border border-[#bbb] bg-white" />
              <span className="pointer-events-none absolute inset-y-0 right-1.5 flex items-center">
                <Chevron d="d" />
              </span>
            </div>
            <span className="w-[26px] pl-1 text-center text-[16px] text-[#555]">«</span>
            <Flat label="Save"><SaveIcon /></Flat>
            <Sep />
            <Flat label="Back"><BackIcon /></Flat>
            <Flat label="Exit"><UpIcon /></Flat>
            <Flat label="Cancel"><CancelIcon /></Flat>
            <Sep />
            <Flat label="Print"><PrintIcon c="#b5b5b5" f="#ddd" /></Flat>
            <Flat label="Find"><FindIcon c="#b5b5b5" f="#e3e3e3" /></Flat>
            <Flat label="Find next"><FindIcon c="#b5b5b5" f="#e3e3e3" plus /></Flat>
            <Sep />
            <Flat label="First page"><PageIcon dir="first" /></Flat>
            <Flat label="Previous page"><PageIcon dir="prev" /></Flat>
            <Flat label="Next page"><PageIcon dir="next" /></Flat>
            <Flat label="Last page"><PageIcon dir="last" /></Flat>
            <Sep />
            <Flat label="New session"><NewSessionIcon /></Flat>
            <Flat label="Create shortcut"><ShortcutIcon /></Flat>
            <Sep />
            <Flat label="Help"><HelpIcon /></Flat>
            <Flat label="Customize layout"><MonitorIcon /></Flat>
          </div>

          <h1 className="mt-2 h-[31px] border-b border-white bg-[#ddd] pl-4 text-[17px] leading-[27px] font-bold italic">Process Monitor</h1>
          <div className="flex h-[33px] items-center bg-[#ddd] pb-0.5 pl-[13px]">
            <button type="button" className="flex items-center gap-0.5"><ExecuteIcon />Start Search</button>
          </div>

          <div className="mt-[7px] ml-[3px] flex gap-px">
            <button type="button" aria-label="Dynamic selections" className={`${BTN} h-[22px] w-[27px] justify-center`}><DynSelIcon /></button>
            <button type="button" aria-label="Delete selection" className={`${BTN} h-[22px] w-5 justify-center`}><DeleteSelIcon /></button>
          </div>

          <section className="mt-px ml-[3px] h-[212px] w-full max-w-[965px] border border-[#e4e4e4] bg-white px-0.5">
            <h2 className="h-[17px] border-b-2 border-[#007cc0] pl-[5px] leading-[17px]">Selection</h2>
            <form className="flex items-start gap-[50px] pt-[3px] pl-1">
              <div className="w-[489px]">
                {leftFields.map((f) => <FieldRow key={f.label} field={f} />)}
              </div>
              <div>
                {rightFields.map((f) => <FieldRow key={f.label} field={f} />)}
              </div>
            </form>
          </section>

          <ProcessGrid />
        </main>

        <StatusBar />
        <ProcessLog />
      </div>
      <Taskbar />
    </div>
  );
}
